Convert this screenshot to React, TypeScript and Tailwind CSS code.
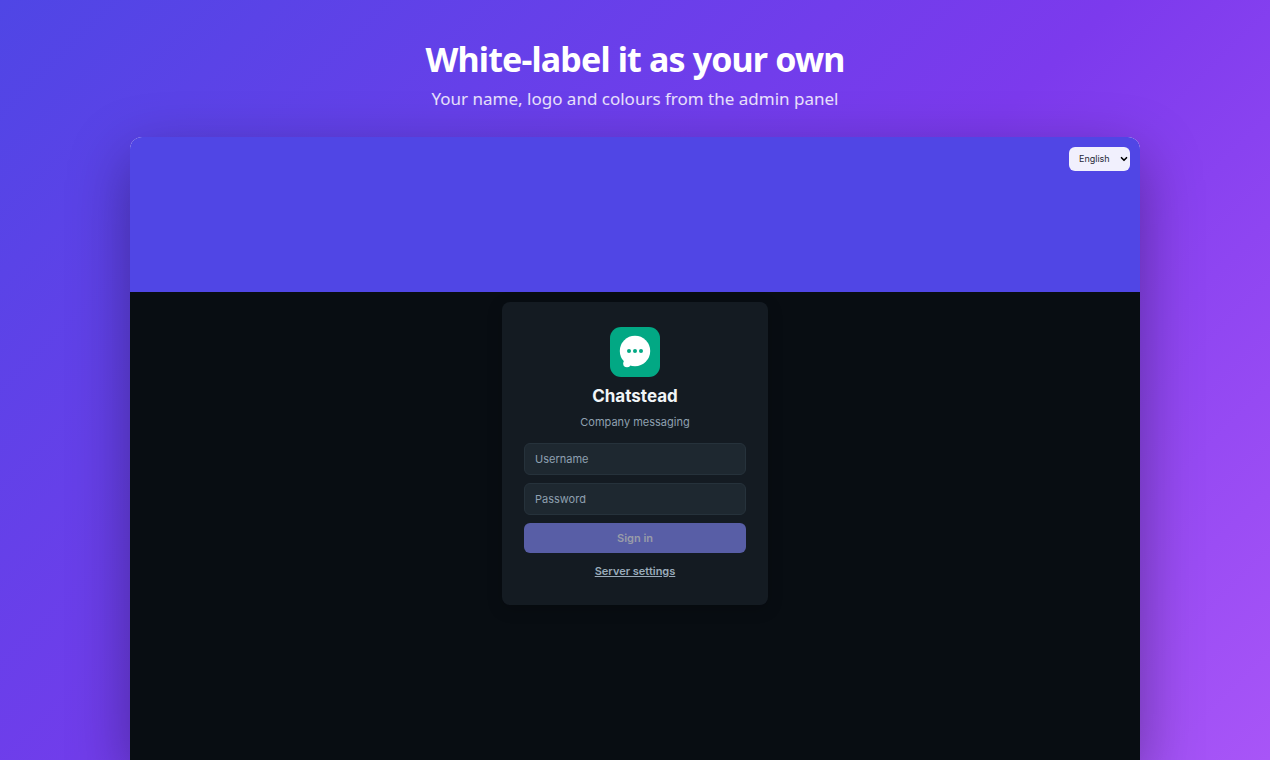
import { useState } from 'react'
import { ChevronDown } from 'lucide-react'

const languages = ['English', 'Deutsch', 'Français', 'Español']

function Logo() {
  return (
    <svg viewBox="0 0 50 50" className="h-[50px] w-[50px]" role="img" aria-label="Chatstead logo">
      <rect width="50" height="50" rx="11" fill="#02a884" />
      <circle cx="25" cy="24" r="15.2" fill="#fff" />
      <circle cx="17" cy="36.5" r="3.8" fill="#fff" />
      <circle cx="19" cy="24" r="2" fill="#02a884" />
      <circle cx="25" cy="24" r="2" fill="#02a884" />
      <circle cx="31" cy="24" r="2" fill="#02a884" />
    </svg>
  )
}

function LanguageSelect() {
  const [language, setLanguage] = useState('English')

  return (
    <div className="relative">
      <select
        aria-label="Language"
        value={language}
        onChange={(e) => setLanguage(e.target.value)}
        className="block h-6 w-[61px] cursor-pointer appearance-none rounded-md bg-[#f1f0fd] pl-[10px] text-[9px] text-[#1f2937]"
      >
        {languages.map((l) => (
          <option key={l}>{l}</option>
        ))}
      </select>
      <ChevronDown
        className="pointer-events-none absolute top-[7px] right-[1px] h-[10px] w-[10px] text-black"
        strokeWidth={4}
      />
    </div>
  )
}

function Field({ label, type }: { label: string; type: string }) {
  return (
    <input
      type={type}
      aria-label={label}
      placeholder={label}
      className="h-8 w-full rounded-md border border-[#26323b] bg-[#1e2830] px-[10px] text-[11px] text-[#e9edef] placeholder:text-[#8fa0b0] focus:outline-none"
    />
  )
}

function LoginCard() {
  return (
    <form
      onSubmit={(e) => e.preventDefault()}
      className="flex w-[266px] flex-col items-center rounded-lg bg-[#141b22] px-[22px] pt-[25px] pb-[26px] shadow-[0_4px_16px_rgba(0,0,0,0.2)]"
    >
      <Logo />
      <h2 className="mt-2 text-[17px] leading-[22px] font-bold text-[#f1f5f7]">Chatstead</h2>
      <p className="mt-[6px] text-[11px] leading-[18px] text-[#8fa0b0]">Company messaging</p>
      <div className="mt-3 flex w-full flex-col gap-2">
        <Field label="Username" type="text" />
        <Field label="Password" type="password" />
        <button
          type="submit"
          className="h-[30px] w-full cursor-pointer rounded-md bg-[#585ea6] text-[11px] font-semibold text-[#989ca9]"
        >
          Sign in
        </button>
      </div>
      <button
        type="button"
        className="mt-[10px] cursor-pointer text-[11px] leading-4 font-semibold text-[#9aabba] underline"
      >
        Server settings
      </button>
    </form>
  )
}

function AppWindow() {
  return (
    <div className="mx-auto flex w-full max-w-[1010px] flex-1 flex-col overflow-hidden rounded-t-xl bg-[#c9c6f5] font-['Inter',sans-serif] shadow-[0_20px_60px_rgba(0,0,0,0.35)]">
      <div className="flex h-[155px] items-start justify-end rounded-t-xl bg-[#5046e5] p-[10px]">
        <LanguageSelect />
      </div>
      <div className="flex flex-1 items-start justify-center bg-[#080d12] pt-[10px] pb-10">
        <LoginCard />
      </div>
    </div>
  )
}

export default function App() {
  return (
    <div className="flex min-h-screen flex-col overflow-hidden bg-[linear-gradient(135deg,#4f46e5_0%,#7c3aed_55%,#a855f7_100%)]">
      <header className="px-4 pt-[35px] pb-[26px] text-center font-['Noto_Sans','Open_Sans',sans-serif] text-white">
        <h1 className="text-[34px] leading-[48px] font-bold tracking-tight">White-label it as your own</h1>
        <p className="mt-1 text-[17px] leading-6 text-white/85">Your name, logo and colours from the admin panel</p>
      </header>
      <AppWindow />
    </div>
  )
}
